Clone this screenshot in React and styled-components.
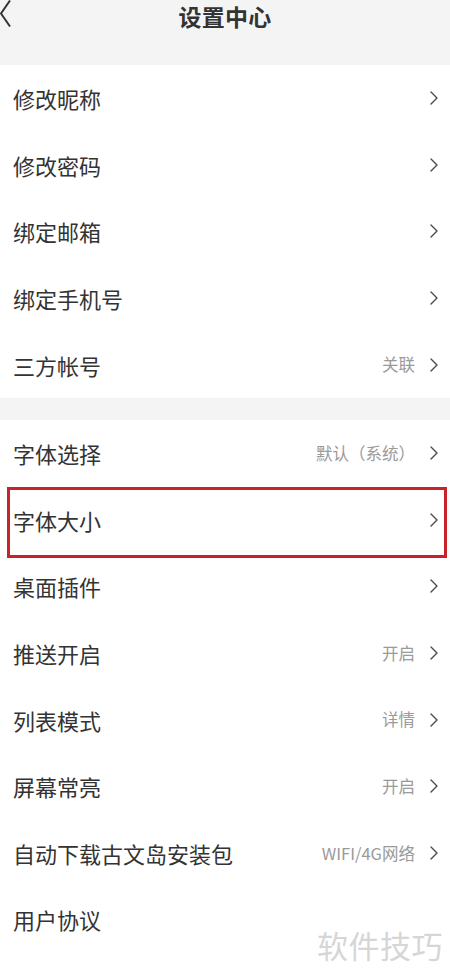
import styled, { createGlobalStyle } from 'styled-components'

const GlobalStyle = createGlobalStyle`
    * {
        box-sizing: border-box;
    }
    body {
        margin: 0;
        background: #fff;
        font-family: 'Noto Sans CJK SC', 'Noto Sans', sans-serif;
    }
`

const Page = styled.div`
    position: relative;
    width: 450px;
    min-height: 976px;
    background: #fff;
    overflow: hidden;
`

const TopBar = styled.div`
    display: grid;
    grid-template-columns: 1fr auto 1fr;
    align-items: start;
    height: 65px;
    background: #f4f4f4;
    > svg {
        display: block;
    }
`

const Title = styled.div`
    font-size: 23px;
    font-weight: 700;
    line-height: 32px;
    color: #333;
    letter-spacing: 0.3px;
`

const Section = styled.div`
    background: #fff;
`

const Gap = styled.div`
    height: 22px;
    background: #f4f4f4;
`

const Row = styled.div`
    position: relative;
    display: flex;
    align-items: center;
    height: 66.6px;
    padding: 0 12px 0 13px;
`

const Label = styled.span`
    flex: 1;
    font-size: 22px;
    color: #333;
    line-height: 1;
`

const Value = styled.span`
    font-size: 16.5px;
    color: #9a9a9a;
    margin-right: 15px;
    line-height: 1;
`

const Highlight = styled.div`
    position: absolute;
    left: 7px;
    right: 3px;
    top: 0;
    bottom: -5px;
    border: 3px solid #c8232b;
    pointer-events: none;
`

const Watermark = styled.div`
    position: absolute;
    right: 7px;
    bottom: 16px;
    font-size: 31px;
    color: #d6d6d6;
    letter-spacing: 0.5px;
    line-height: 1;
`

const Arrow = () => (
    <svg width='8' height='14' viewBox='0 0 8 14'>
        <path d='M1 1 L7 7 L1 13' fill='none' stroke='#4a4a4a' strokeWidth='1.4' strokeLinecap='round' strokeLinejoin='round' />
    </svg>
)

const accountItems = [
    { label: '修改昵称' },
    { label: '修改密码' },
    { label: '绑定邮箱' },
    { label: '绑定手机号' },
    { label: '三方帐号', value: '关联' },
]

const otherItems = [
    { label: '字体选择', value: '默认（系统）' },
    { label: '字体大小', marked: true },
    { label: '桌面插件' },
    { label: '推送开启', value: '开启' },
    { label: '列表模式', value: '详情' },
    { label: '屏幕常亮', value: '开启' },
    { label: '自动下载古文岛安装包', value: 'WIFI/4G网络' },
    { label: '用户协议', noArrow: true },
]

function Item({ item }) {
    return (
        <Row>
            <Label>{item.label}</Label>
            {item.value && <Value>{item.value}</Value>}
            {!item.noArrow && <Arrow />}
            {item.marked && <Highlight />}
        </Row>
    )
}

export default function App() {
    return (
        <Page>
            <GlobalStyle />
            <TopBar>
                <svg width='12' height='28' viewBox='0 0 12 28'>
                    <path d='M10 0.5 L1 13.5 L10 26.5' fill='none' stroke='#333' strokeWidth='2' />
                </svg>
                <Title>设置中心</Title>
                <span />
            </TopBar>
            <Section>
                {accountItems.map((item) => (
                    <Item key={item.label} item={item} />
                ))}
            </Section>
            <Gap />
            <Section>
                {otherItems.map((item) => (
                    <Item key={item.label} item={item} />
                ))}
            </Section>
            <Watermark>软件技巧</Watermark>
        </Page>
    )
}
